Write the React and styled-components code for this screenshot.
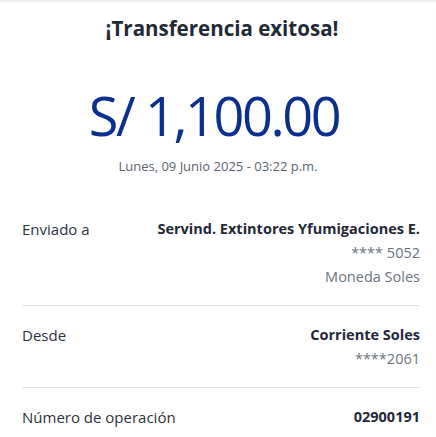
import React from "react";
import styled, { createGlobalStyle } from "styled-components";

const GlobalStyle = createGlobalStyle`
  html, body {
    margin: 0;
    padding: 0;
    background: #fff;
  }
  body {
    font-family: "Open Sans", "Noto Sans", sans-serif;
  }
`;

const Page = styled.div`
  width: 436px;
  height: 437px;
  overflow: hidden;
  background: #fff;
  box-shadow: inset 0 3px 3px -2px rgba(0, 0, 0, 0.12);
`;

const Header = styled.div`
  display: flex;
  flex-direction: column;
  align-items: center;
  padding-top: 14px;
`;

const Title = styled.h1`
  margin: 0 0 0 8px;
  font-size: 20.5px;
  line-height: 28px;
  font-weight: 700;
  color: #1f2937;
`;

const Amount = styled.div`
  margin: 42px 8px 0 0;
  font-size: 54px;
  line-height: 62px;
  font-weight: 400;
  color: #0b2f8f;
  letter-spacing: -2.4px;
`;

const Stamp = styled.div`
  margin-top: 12px;
  font-size: 13px;
  line-height: 16px;
  color: #5b6472;
`;

const Details = styled.div`
  margin-top: 43px;
  padding: 0 16px 0 22px;
`;

const Row = styled.div`
  display: flex;
  justify-content: space-between;
  align-items: flex-start;
  padding: ${(p) => (p.$first ? "0" : "17px")} 0 16px;
  border-bottom: ${(p) => (p.$last ? "none" : "1px solid #e2e3e5")};
`;

const Label = styled.div`
  font-size: 15px;
  line-height: 24px;
  color: #2b3340;
`;

const Values = styled.div`
  display: flex;
  flex-direction: column;
  align-items: flex-end;
  text-align: right;
`;

const Value = styled.div`
  font-size: 14.5px;
  line-height: 24px;
  font-weight: ${(p) => (p.$strong ? 700 : 400)};
  color: ${(p) => (p.$strong ? "#1f2937" : "#6b7480")};
`;

const rows = [
  {
    label: "Enviado a",
    values: ["Servind. Extintores Yfumigaciones E.", "**** 5052", "Moneda Soles"],
  },
  { label: "Desde", values: ["Corriente Soles", "****2061"] },
  { label: "Número de operación", values: ["02900191"] },
];

export default function App() {
  return (
    <>
      <GlobalStyle />
      <Page>
        <Header>
          <Title>¡Transferencia exitosa!</Title>
          <Amount>S/ 1,100.00</Amount>
          <Stamp>Lunes, 09 Junio 2025 - 03:22 p.m.</Stamp>
        </Header>
        <Details>
          {rows.map((row, i) => (
            <Row key={row.label} $first={i === 0} $last={i === rows.length - 1}>
              <Label>{row.label}</Label>
              <Values>
                {row.values.map((v, j) => (
                  <Value key={v} $strong={j === 0}>
                    {v}
                  </Value>
                ))}
              </Values>
            </Row>
          ))}
        </Details>
      </Page>
    </>
  );
}
